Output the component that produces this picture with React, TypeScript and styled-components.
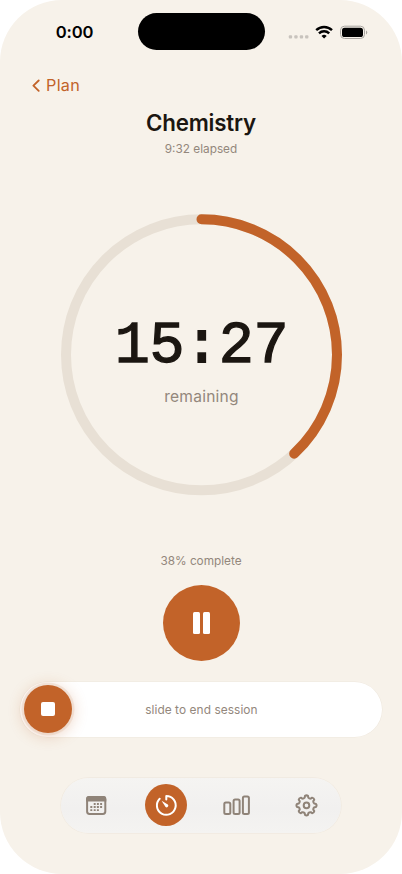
import React from "react";
import styled, { createGlobalStyle } from "styled-components";

const accent = "#c26329";
const muted = "#93877c";
const cream = "#f7f2ea";

const GlobalStyle = createGlobalStyle`
  * { box-sizing: border-box; }
  body { margin: 0; background: #fff; font-family: Inter, "Liberation Sans", sans-serif; }
  button { font: inherit; border: 0; padding: 0; background: none; cursor: pointer; }
`;

const Screen = styled.main`
  width: 402px;
  height: 874px;
  border-radius: 62px;
  background: ${cream};
  display: flex;
  flex-direction: column;
  overflow: hidden;
`;

const StatusBar = styled.header`
  height: 63px;
  flex: none;
  display: grid;
  grid-template-columns: 138px 127px 1fr;
  align-items: center;
`;

const Clock = styled.span`
  padding: 1px 0 0 11px;
  text-align: center;
  font-size: 16.6px;
  font-weight: 600;
  letter-spacing: -0.1px;
  color: #000;
`;

const Island = styled.div`
  height: 37px;
  border-radius: 19px;
  background: #000;
`;

const StatusIcons = styled.div`
  display: flex;
  align-items: center;
  padding-left: 23.4px;
`;

const Back = styled.button`
  height: 20px;
  margin: 12px 0 0 32px;
  align-self: flex-start;
  display: flex;
  align-items: center;
  gap: 6px;
  color: ${accent};
  font-size: 16.2px;
  letter-spacing: 0.3px;
  line-height: 20px;
`;

const Title = styled.h1`
  margin: 14px 0 0;
  height: 28px;
  line-height: 28px;
  text-align: center;
  font-size: 22.3px;
  font-weight: 600;
  letter-spacing: -0.2px;
  color: #1b1611;
`;

const Caption = styled.p<{ $size: number; $top: number; $tracking?: number }>`
  margin: ${(p) => p.$top}px 0 0;
  height: 16px;
  line-height: 16px;
  text-align: center;
  font-size: ${(p) => p.$size}px;
  letter-spacing: ${(p) => p.$tracking ?? 0}px;
  color: ${muted};
`;

const Dial = styled.section`
  width: 281px;
  height: 281px;
  margin: 57px 0 0 61px;
  display: grid;
  place-items: center;
  flex: none;
  > * { grid-area: 1 / 1; }
`;

const Ring = styled.svg`
  display: block;
  overflow: visible;
`;

const Readout = styled.div`
  text-align: center;
  padding-top: 6px;
`;

const Time = styled.div`
  height: 66px;
  line-height: 73px;
  font-family: "Liberation Mono", monospace;
  font-size: 58.5px;
  letter-spacing: -0.4px;
  -webkit-text-stroke: 1.3px #1b1611;
  color: #1b1611;
`;

const Colon = styled.span`
  -webkit-text-stroke-width: 2px;
`;

const PauseButton = styled.button`
  width: 77px;
  height: 76px;
  margin: 16px 0 0 163px;
  flex: none;
  border-radius: 50%;
  background: ${accent};
  display: flex;
  justify-content: center;
  align-items: center;
  gap: 3px;
`;

const PauseBar = styled.span`
  width: 7px;
  height: 22.5px;
  border-radius: 1.5px;
  background: #fff;
`;

const Slider = styled.div`
  width: 362px;
  height: 55px;
  margin: 21px 0 0 20.4px;
  padding: 0 3.6px 1px;
  flex: none;
  border-radius: 28px;
  background: #fff;
  box-shadow: 0 0 0 0.5px #eee7dd;
  display: grid;
  align-items: center;
  > * { grid-area: 1 / 1; }
`;

const SliderLabel = styled.span`
  text-align: center;
  font-size: 11.9px;
  letter-spacing: 0.06px;
  color: ${muted};
`;

const Knob = styled.button`
  width: 48px;
  height: 48px;
  border-radius: 50%;
  background: ${accent};
  box-shadow: 0 2px 16px rgba(194, 99, 41, 0.32), 0 0 0 2.5px rgba(244, 232, 224, 0.7);
  display: grid;
  place-items: center;
`;

const StopSquare = styled.span`
  width: 14px;
  height: 14px;
  border-radius: 2px;
  background: #fff;
`;

const TabBar = styled.nav`
  width: 280px;
  height: 55px;
  margin: 41px 0 0 61.4px;
  padding-bottom: 1px;
  flex: none;
  border-radius: 28px;
  background: linear-gradient(#f5f4f2, #f1f0ef 55%, #f4f3f1);
  box-shadow: 0 0 0 0.7px #f0e9df;
  display: grid;
  grid-template-columns: repeat(4, 70px);
  place-items: center;
`;

const Tab = styled.button<{ $active?: boolean }>`
  width: 42px;
  height: 42px;
  border-radius: 50%;
  display: grid;
  place-items: center;
  color: ${(p) => (p.$active ? "#fff" : "#8f8378")};
  background: ${(p) => (p.$active ? accent : "transparent")};
`;

const StatusGlyphs = () => (
  <svg width="82" height="16" viewBox="0 0 82 16">
    <g fill="#c8c3bd">
      {[0.8, 6.3, 11.8, 17.1].map((x) => (
        <rect key={x} x={x} y="11.3" width="3.3" height="3.2" rx="0.9" />
      ))}
    </g>
    <g fill="none" stroke="#000" strokeWidth="2.4">
      <path d="M28.2 6.2a11.4 11.4 0 0 1 15.8 0" />
      <path d="M31 9.4a7.3 7.3 0 0 1 10.2 0" />
    </g>
    <path d="M36.1 14.6l-2.6-2.7a3.8 3.8 0 0 1 5.2 0z" />
    <rect x="52.5" y="2.2" width="24" height="12.3" rx="4" fill="none" stroke="#a9a5a0" />
    <rect x="54" y="3.8" width="21" height="9.2" rx="2.6" />
    <path d="M78 6.4v4a2.2 2.2 0 0 0 0-4z" fill="#a9a5a0" />
  </svg>
);

const CalendarIcon = () => (
  <svg width="22" height="22" viewBox="-0.5 -0.5 22 22">
    <rect x="1.6" y="2.6" width="18.2" height="16.8" rx="2.4" fill="none" stroke="currentColor" strokeWidth="2" />
    <path d="M.6 7V4.7Q.6 1.6 3.6 1.6h14.2q3 0 3 3.1V7z" fill="currentColor" />
    <g fill="currentColor">
      {[
        [8.2, 8.5], [11.4, 8.5], [14.6, 8.5],
        [4.8, 11.6], [8.2, 11.6], [11.4, 11.6], [14.6, 11.6],
        [4.8, 14.7], [8.2, 14.7], [11.4, 14.7],
      ].map(([x, y]) => (
        <rect key={`${x}-${y}`} x={x} y={y} width="2" height="1.9" rx="0.3" />
      ))}
    </g>
  </svg>
);

const TimerIcon = () => (
  <svg width="24" height="24" viewBox="-0.3 -0.3 24 24" fill="none" stroke="currentColor" strokeWidth="2" strokeLinecap="round" strokeLinejoin="round">
    <path d="M12 6.2V2.7A9.4 9.4 0 1 1 5.4 5.4" />
    <path d="M7.3 7.4l6.2 3.7a1.6 1.6 0 1 1-2.4 2.4z" fill="currentColor" stroke="none" />
  </svg>
);

const BarsIcon = () => (
  <svg width="28" height="22" viewBox="-0.7 -0.4 28 22" fill="none" stroke="currentColor" strokeWidth="2">
    <rect x="1.6" y="8" width="6" height="11.7" rx="1.5" />
    <rect x="10.9" y="5" width="6" height="14.7" rx="1.5" />
    <rect x="20.2" y="2.1" width="6" height="17.6" rx="1.5" />
  </svg>
);

const gearPoint = (i: number, deg: number, r: number) => {
  const a = ((i * 45 + deg - 90) * Math.PI) / 180;
  return `${(12.5 + r * Math.cos(a)).toFixed(2)} ${(12.4 + r * Math.sin(a)).toFixed(2)}`;
};

const gearOutline = Array.from({ length: 8 }, (_, i) => {
  const at = (deg: number, r: number) => gearPoint(i, deg, r);
  return `${i ? "L" : "M"}${at(-13, 8)}L${at(-9, 9.6)}Q${at(0, 10.6)} ${at(9, 9.6)}L${at(13, 8)}Q${at(22.5, 7.2)} ${at(32, 8)}`;
}).join("");

const GearIcon = () => (
  <svg width="24" height="24" viewBox="0 0 24 24" fill="none" stroke="currentColor" strokeWidth="2" strokeLinejoin="round">
    <path d={`${gearOutline}Z`} />
    <circle cx="12.5" cy="12.4" r="2.8" />
  </svg>
);

const progress = 0.38;
const circumference = 2 * Math.PI * 135.5;

export default function App() {
  return (
    <>
      <GlobalStyle />
      <Screen>
        <StatusBar>
          <Clock>0:00</Clock>
          <Island />
          <StatusIcons><StatusGlyphs /></StatusIcons>
        </StatusBar>
        <Back>
          <svg width="8" height="14" viewBox="0 0 8 14" fill="none" stroke="currentColor" strokeWidth="1.8" strokeLinecap="round" strokeLinejoin="round">
            <path d="M6.7 2.5L1.4 7.7l5.3 5.2" />
          </svg>
          Plan
        </Back>
        <Title>Chemistry</Title>
        <Caption $size={11.8} $top={4}>9:32 elapsed</Caption>
        <Dial>
          <Ring width="281" height="281" fill="none" strokeWidth="10">
            <circle cx="140.5" cy="140.8" r="135.5" stroke="#e8e0d5" />
            <circle
              cx="140.5" cy="140.8" r="135.5" stroke={accent} strokeLinecap="round"
              strokeDasharray={`${circumference * progress} ${circumference}`}
              transform="rotate(-90 140.5 140.8)"
            />
          </Ring>
          <Readout>
            <Time>15<Colon>:</Colon>27</Time>
            <Caption $size={15.6} $top={13} $tracking={0.2}>remaining</Caption>
          </Readout>
        </Dial>
        <Caption $size={11.8} $top={58}>38% complete</Caption>
        <PauseButton aria-label="Pause"><PauseBar /><PauseBar /></PauseButton>
        <Slider>
          <SliderLabel>slide to end session</SliderLabel>
          <Knob aria-label="End session"><StopSquare /></Knob>
        </Slider>
        <TabBar>
          <Tab aria-label="Calendar"><CalendarIcon /></Tab>
          <Tab aria-label="Timer" $active><TimerIcon /></Tab>
          <Tab aria-label="Statistics"><BarsIcon /></Tab>
          <Tab aria-label="Settings"><GearIcon /></Tab>
        </TabBar>
      </Screen>
    </>
  );
}
